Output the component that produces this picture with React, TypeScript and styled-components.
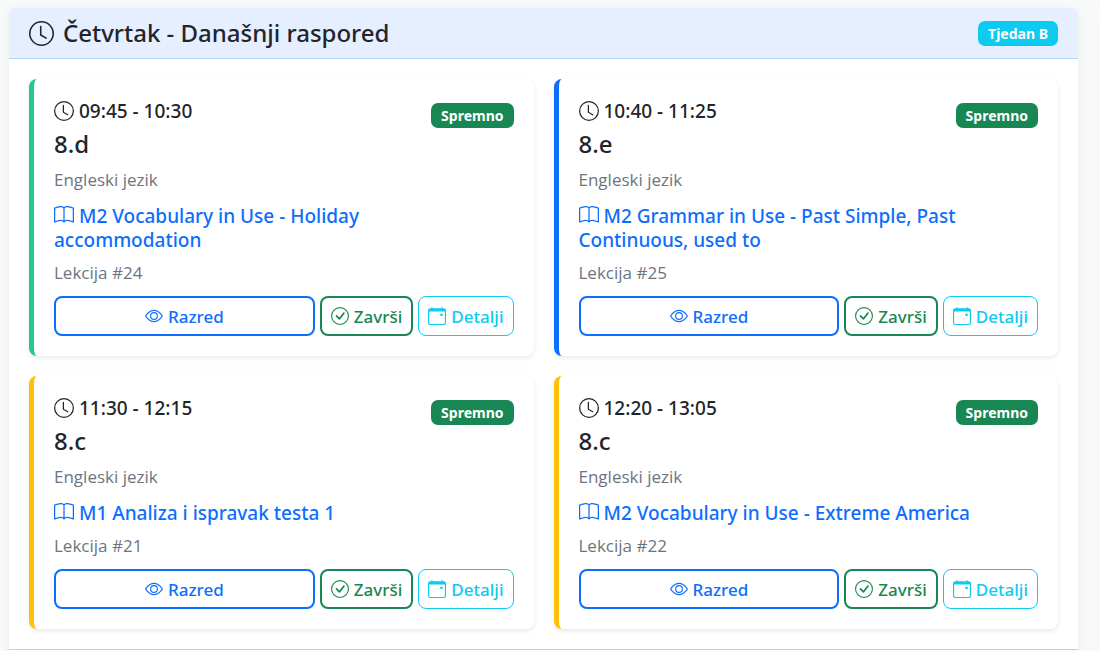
import React from "react";
import styled, { createGlobalStyle } from "styled-components";
import { BsBook, BsCalendarEvent, BsCheckCircle, BsClock, BsEye } from "react-icons/bs";

const GlobalStyle = createGlobalStyle`
  *, *::before, *::after { box-sizing: border-box; }
  body {
    margin: 0;
    background: #f8f9fa;
    color: #212529;
    font-family: "Segoe UI", "Noto Sans", "Open Sans", sans-serif;
    font-size: 17px;
    line-height: 26px;
  }
  h1, h2, h3, h4, p { margin: 0; }
`;

const Page = styled.div`
  display: flex;
  gap: 20px;
  min-height: 100vh;
  padding: 8px 0 0 9px;
  overflow: hidden;
`;

const Panel = styled.main`
  flex: 1;
  min-width: 0;
  align-self: flex-start;
  background: #fff;
  border-radius: 6px;
  box-shadow: 0 2px 10px rgba(0, 0, 0, 0.06);
`;

const SidePanel = styled.aside`
  width: 2px;
  flex: none;
  box-shadow: 0 0 12px rgba(0, 0, 0, 0.06);
`;

const PanelHeader = styled.header`
  display: flex;
  align-items: center;
  justify-content: space-between;
  height: 51px;
  padding: 0 20px;
  background: #e6efff;
  border-bottom: 1px solid #b6d4fe;
  border-radius: 6px 6px 0 0;
`;

const Title = styled.h1`
  display: flex;
  align-items: center;
  gap: 9px;
  font-size: 24px;
  font-weight: 500;
  line-height: 30px;
`;

const Badge = styled.span<{ $tone: string }>`
  flex: none;
  padding: 0 10px;
  border-radius: 7px;
  background: ${(p) => p.$tone};
  color: #fff;
  font-size: 14px;
  font-weight: 700;
  line-height: 25px;
`;

const Lessons = styled.div`
  display: grid;
  grid-template-columns: repeat(2, minmax(0, 1fr));
  gap: 20px;
  padding: 20px;
`;

const PanelFooter = styled.footer`
  height: 20px;
  border-top: 1px solid #cbccce;
`;

const Card = styled.article<{ $accent: string }>`
  padding: 20px;
  background: #fff;
  border-left: 5px solid ${(p) => p.$accent};
  border-radius: 8px;
  box-shadow: 0 2px 5px rgba(0, 0, 0, 0.09);
`;

const CardTop = styled.div`
  display: flex;
  align-items: flex-start;
  justify-content: space-between;

  ${Badge} { margin-top: 4px; }
`;

const Time = styled.h2`
  display: flex;
  align-items: center;
  gap: 5px;
  margin-bottom: 6px;
  font-size: 19px;
  font-weight: 500;
  line-height: 24px;
`;

const ClassName = styled.h3`
  margin-bottom: 8px;
  font-size: 24px;
  font-weight: 500;
  line-height: 30px;
`;

const Muted = styled.p`
  color: #6c757d;
  font-family: "Segoe UI", "Open Sans", sans-serif;
  font-size: 17px;
  line-height: 26px;
`;

const Topic = styled.h4`
  margin: 11px 0 8px;
  padding-right: 8px;
  color: #0d6efd;
  font-size: 19px;
  font-weight: 500;
  line-height: 24px;

  svg { margin-right: 5px; vertical-align: -2px; }
`;

const Actions = styled.div`
  display: flex;
  gap: 5px;
  margin-top: 10px;
`;

const Action = styled.button<{ $tone: string; $grow?: boolean; $thin?: boolean }>`
  display: flex;
  align-items: center;
  justify-content: center;
  gap: 5px;
  flex: ${(p) => (p.$grow ? "1" : "none")};
  height: 40px;
  padding: 0 9px;
  background: #fff;
  border: ${(p) => (p.$thin ? "1px" : "2px")} solid ${(p) => p.$tone};
  border-radius: 8px;
  color: ${(p) => p.$tone};
  font-family: inherit;
  font-size: 17px;
  font-weight: 500;
  cursor: pointer;
`;

const lessons = [
  { time: "09:45 - 10:30", group: "8.d", topic: "M2 Vocabulary in Use - Holiday accommodation", number: 24, accent: "#20c997" },
  { time: "10:40 - 11:25", group: "8.e", topic: "M2 Grammar in Use - Past Simple, Past Continuous, used to", number: 25, accent: "#0d6efd" },
  { time: "11:30 - 12:15", group: "8.c", topic: "M1 Analiza i ispravak testa 1", number: 21, accent: "#ffc107" },
  { time: "12:20 - 13:05", group: "8.c", topic: "M2 Vocabulary in Use - Extreme America", number: 22, accent: "#ffc107" },
];

export default function App() {
  return (
    <>
      <GlobalStyle />
      <Page>
        <Panel>
          <PanelHeader>
            <Title><BsClock size={25} />Četvrtak - Današnji raspored</Title>
            <Badge $tone="#0dcaf0">Tjedan B</Badge>
          </PanelHeader>
          <Lessons>
            {lessons.map((lesson) => (
              <Card key={lesson.number} $accent={lesson.accent}>
                <CardTop>
                  <div>
                    <Time><BsClock size={20} />{lesson.time}</Time>
                    <ClassName>{lesson.group}</ClassName>
                    <Muted>Engleski jezik</Muted>
                  </div>
                  <Badge $tone="#198754">Spremno</Badge>
                </CardTop>
                <Topic><BsBook size={20} />{lesson.topic}</Topic>
                <Muted>Lekcija #{lesson.number}</Muted>
                <Actions>
                  <Action type="button" $tone="#0d6efd" $grow><BsEye size={18} />Razred</Action>
                  <Action type="button" $tone="#198754"><BsCheckCircle size={18} />Završi</Action>
                  <Action type="button" $tone="#0dcaf0" $thin><BsCalendarEvent size={18} />Detalji</Action>
                </Actions>
              </Card>
            ))}
          </Lessons>
          <PanelFooter />
        </Panel>
        <SidePanel />
      </Page>
    </>
  );
}
